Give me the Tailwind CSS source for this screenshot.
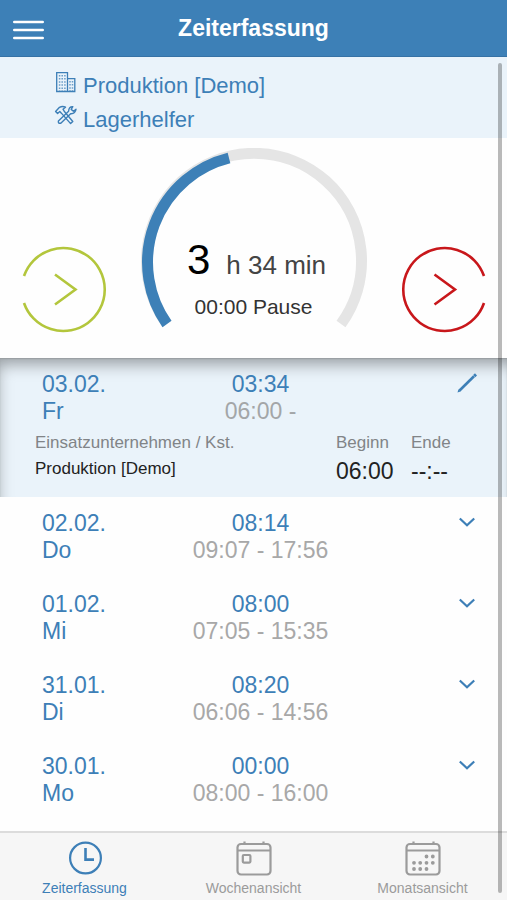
<!DOCTYPE html>
<html lang="de">
<head>
<meta charset="utf-8">
<meta name="viewport" content="width=device-width, initial-scale=1">
<title>Zeiterfassung</title>
<script src="https://cdn.jsdelivr.net/npm/@tailwindcss/browser@4"></script>
</head>
<body class="relative flex min-h-screen flex-col bg-[#fefefe] font-['Liberation_Sans',Arial,sans-serif] text-[#3d7fb7]">

<header class="grid h-[57px] grid-cols-[1fr_auto_1fr] items-center border-b border-[#3672a5] bg-[#3d80b7] px-3 text-white">
  <button type="button" aria-label="Menü" class="w-8 pt-1">
    <svg class="h-6 w-8" viewBox="0 0 32 24" fill="none" stroke="currentColor" stroke-width="2.6" stroke-linecap="round"><path d="M2.3 4H30.7M2.3 12H30.7M2.3 20H30.7"/></svg>
  </button>
  <h1 class="text-[23px] leading-8 font-bold">Zeiterfassung</h1>
</header>

<section class="bg-[#eaf3fa] pt-3 pb-px pl-[54px] text-[22px] leading-[34px]">
  <div class="flex gap-[5px]">
    <svg class="mt-px size-6" viewBox="0 0 24 24" fill="none" stroke="currentColor" stroke-width="1.3"><path d="M2.7 21.5V2.7H13.5V21.5ZM13.5 8.7H20.8V21.5H13.5"/><path stroke-width="1.5" stroke-dasharray="1.5 1.6" d="M5.6 5V21M8.2 5V21M10.9 5V21M16 11V21M18.5 11V21" opacity=".75"/></svg>
    <span>Produktion [Demo]</span>
  </div>
  <div class="flex gap-[5px]">
    <svg class="mt-px size-6" viewBox="0 0 24 24" fill="none" stroke="currentColor" stroke-width="1.4" stroke-linejoin="round"><path d="M1.6 7.5L5.5 3.3Q8.5 1.7 11.5 3.2L9 5.2L10.2 7.2L18.8 17.5L16.6 19.6L7.6 9.4L5.8 7.6L3.6 9.6Z"/><path d="M18.8 2.7Q14.8 2.4 14.6 7.2L4.4 17Q3.8 19.7 6.8 19.2L16.6 9.7Q21.3 10 22 5.2L19.4 7.2L17.2 5.4Z"/></svg>
    <span>Lagerhelfer</span>
  </div>
</section>

<main class="flex flex-1 flex-col">
  <section class="flex h-[220px] items-start justify-between px-5">
    <button type="button" aria-label="Kommen" class="mt-[107px] text-[#b3c63c]">
      <svg class="size-[88px]" viewBox="0 0 88 88" fill="none" stroke="currentColor" stroke-width="2.6"><path d="M4 31A41.5 41.5 0 1 1 4 58"/><path d="M35 29.5L55.5 44.5L35 59.5"/></svg>
    </button>
    <div class="relative mt-[10px] h-[192px] w-[228px]">
      <svg class="h-[192px] w-[228px]" viewBox="0 0 228 192" fill="none" stroke-width="11"><path stroke="#e5e5e5" d="M27 176A107.5 107.5 0 1 1 201 176"/><path stroke="#3d80b7" d="M27 176A107.5 107.5 0 0 1 89 10"/></svg>
      <div class="absolute inset-x-0 top-[88px] text-center">
        <p class="flex items-baseline justify-center gap-4 pl-[6px] text-[26px] leading-[48px] text-[#444]"><span class="text-[42px] text-black">3</span><span>h 34 min</span></p>
        <p class="text-[21px] leading-9 text-[#333]">00:00 Pause</p>
      </div>
    </div>
    <button type="button" aria-label="Gehen" class="mt-[107px] text-[#c8171b]">
      <svg class="size-[88px]" viewBox="0 0 88 88" fill="none" stroke="currentColor" stroke-width="2.6"><path d="M85 31A41.5 41.5 0 1 0 85 58"/><path d="M35.5 29.5L56 44.5L35.5 59.5"/></svg>
    </button>
  </section>

  <section class="bg-[#eaf3fa] pt-[13px] pb-3 shadow-[inset_0_1px_1px_#9a9fa2,inset_3px_12px_16px_-6px_rgba(0,0,0,0.36)]">
    <div class="grid grid-cols-[1fr_auto_1fr] pr-7 pl-[42px] text-[23px] leading-[27px]">
      <div>03.02.<br>Fr</div>
      <div class="text-center">03:34<br><span class="text-[#a3a6a8]">06:00 -</span></div>
      <button type="button" aria-label="Bearbeiten" class="size-6 justify-self-end"><svg viewBox="0 0 24 24" fill="none" stroke="currentColor"><path stroke-width="2.6" d="M4.3 19.7L19 5.3"/><path stroke-width="3" d="M19.2 5.1L21 3.4"/><path fill="currentColor" stroke="none" d="M2.5 21.5L3.4 18.6L5.4 20.6Z"/></svg></button>
    </div>
    <table class="mt-[6px] w-full table-fixed text-left">
      <thead>
        <tr class="h-[26px] align-top text-[17px] leading-6 text-[#818487]">
          <th class="pl-[35px] font-normal">Einsatzunternehmen / Kst.</th>
          <th class="w-[75px] font-normal">Beginn</th>
          <th class="w-24 font-normal">Ende</th>
        </tr>
      </thead>
      <tbody>
        <tr class="align-top text-[23px] leading-7 text-[#222]">
          <td class="pl-[35px] text-[17px] leading-6">Produktion [Demo]</td>
          <td>06:00</td>
          <td>--:--</td>
        </tr>
      </tbody>
    </table>
  </section>

  <ul class="text-[23px] leading-[27px]">
    <li class="grid grid-cols-[1fr_auto_1fr] pt-[13px] pr-7 pb-[14px] pl-[42px]">
      <div>02.02.<br>Do</div>
      <div class="text-center">08:14<br><span class="text-[#a8a8a8]">09:07 - 17:56</span></div>
      <button type="button" aria-label="02.02. aufklappen" class="size-6 justify-self-end"><svg viewBox="0 0 24 24" fill="none" stroke="currentColor" stroke-width="2.2"><path d="M4.8 8.5L12 15.3L19.2 8.5"/></svg></button>
    </li>
    <li class="grid grid-cols-[1fr_auto_1fr] pt-[13px] pr-7 pb-[14px] pl-[42px]">
      <div>01.02.<br>Mi</div>
      <div class="text-center">08:00<br><span class="text-[#a8a8a8]">07:05 - 15:35</span></div>
      <button type="button" aria-label="01.02. aufklappen" class="size-6 justify-self-end"><svg viewBox="0 0 24 24" fill="none" stroke="currentColor" stroke-width="2.2"><path d="M4.8 8.5L12 15.3L19.2 8.5"/></svg></button>
    </li>
    <li class="grid grid-cols-[1fr_auto_1fr] pt-[13px] pr-7 pb-[14px] pl-[42px]">
      <div>31.01.<br>Di</div>
      <div class="text-center">08:20<br><span class="text-[#a8a8a8]">06:06 - 14:56</span></div>
      <button type="button" aria-label="31.01. aufklappen" class="size-6 justify-self-end"><svg viewBox="0 0 24 24" fill="none" stroke="currentColor" stroke-width="2.2"><path d="M4.8 8.5L12 15.3L19.2 8.5"/></svg></button>
    </li>
    <li class="grid grid-cols-[1fr_auto_1fr] pt-[13px] pr-7 pb-[14px] pl-[42px]">
      <div>30.01.<br>Mo</div>
      <div class="text-center">00:00<br><span class="text-[#a8a8a8]">08:00 - 16:00</span></div>
      <button type="button" aria-label="30.01. aufklappen" class="size-6 justify-self-end"><svg viewBox="0 0 24 24" fill="none" stroke="currentColor" stroke-width="2.2"><path d="M4.8 8.5L12 15.3L19.2 8.5"/></svg></button>
    </li>
  </ul>
</main>

<nav class="grid grid-cols-3 border-t-2 border-[#dcdcdc] bg-[#f6f6f6] pt-[7px] text-[14px] leading-6 text-[#9b9b9b]">
  <a href="#" aria-current="page" class="flex flex-col items-center text-[#3d7fb7]">
    <svg class="size-9" viewBox="0 0 36 36" fill="none" stroke="currentColor" stroke-width="2.2"><circle cx="18.5" cy="18" r="15.4"/><path stroke-width="2.6" d="M18.5 8V19.6H27"/></svg>
    Zeiterfassung
  </a>
  <a href="#" class="flex flex-col items-center">
    <svg class="size-9" viewBox="0 0 36 36" fill="none" stroke="currentColor" stroke-width="2.2"><rect x="1.5" y="4" width="33" height="30.5" rx="3.5"/><path d="M1.5 10.5H34.5M8.5 1.5V4M27.5 1.5V4"/><rect x="6.8" y="15" width="7.6" height="7.6" rx="1"/></svg>
    Wochenansicht
  </a>
  <a href="#" class="flex flex-col items-center">
    <svg class="size-9" viewBox="0 0 36 36" fill="none" stroke="currentColor" stroke-width="2.2"><rect x="1.5" y="4" width="33" height="30.5" rx="3.5"/><path d="M1.5 10.5H34.5M8.5 1.5V4M28.5 1.5V4"/><path stroke-width="3.8" stroke-linecap="round" d="M21.5 16.5h.01M27.8 16.5h.01M9 22.8h.01M15.2 22.8h.01M21.5 22.8h.01M27.8 22.8h.01M9 29h.01M15.2 29h.01M21.5 29h.01"/></svg>
    Monatsansicht
  </a>
</nav>

<div aria-hidden="true" class="absolute top-[63px] right-[5px] bottom-[7px] w-1 rounded-xs bg-black/27"></div>
</body>
</html>
